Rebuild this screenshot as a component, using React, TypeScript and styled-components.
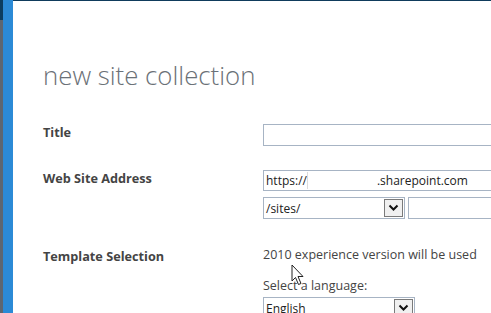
import React from 'react';
import styled, { createGlobalStyle } from 'styled-components';

const Global = createGlobalStyle`
    html, body { margin: 0; padding: 0; background: #fff; overflow: hidden; }
    body { font-family: "Open Sans", "Noto Sans", "Liberation Sans", sans-serif; }
`;

export default function App() {
    return (
        <>
            <Global />
            <Page>
                <Rail>
                    <RailEdge />
                    <RailBlue />
                </Rail>
                <Panel>
                    <Heading>new site collection</Heading>
                    <Form>
                        <Label>Title</Label>
                        <Field>
                            <TextBox />
                        </Field>

                        <Label gap={24}>Web Site Address</Label>
                        <Field gap={24}>
                            <UrlBox>
                                <span>https://</span>
                                <UrlBlank />
                                <span>.sharepoint.com</span>
                            </UrlBox>
                            <Line>
                                <Select width={142}>
                                    <span>/sites/</span>
                                    <DropButton><Chevron /></DropButton>
                                </Select>
                                <TextBox />
                            </Line>
                        </Field>

                        <Label gap={29}>Template Selection</Label>
                        <Field gap={28} tight>
                            <Note>2010 experience version will be used</Note>
                            <Note top={15}>Select a language:</Note>
                            <Select width={152} top={3}>
                                <span>English</span>
                                <DropButton><Chevron /></DropButton>
                            </Select>
                        </Field>
                    </Form>
                    <Pointer />
                </Panel>
            </Page>
        </>
    );
}

function Chevron() {
    return (
        <svg width="11" height="8" viewBox="0 0 11 8">
            <polyline points="1.5,1.5 5.5,5.5 9.5,1.5" fill="none" stroke="#111" strokeWidth="2" />
        </svg>
    );
}

function Pointer() {
    return (
        <Cursor width="14" height="22" viewBox="0 0 14 22">
            <path d="M1 1 L1 17 L4.5 13.5 L7.5 20.5 L10 19.5 L7 12.5 L12 12.5 Z" fill="#fff" stroke="#222" strokeWidth="1" strokeLinejoin="round" />
        </Cursor>
    );
}

const Page = styled.div`
    display: flex;
    width: 491px;
    height: 313px;
`;

const Rail = styled.div`
    display: flex;
    flex: 0 0 13px;
`;

const RailEdge = styled.div`
    width: 3px;
    background: linear-gradient(#0c3d60 0 20px, #5d6670 20px);
`;

const RailBlue = styled.div`
    width: 10px;
    background: #2b8ad6;
`;

const Panel = styled.div`
    position: relative;
    flex: 1;
    border-top: 1px solid #0f3b5c;
    padding-left: 30px;
    overflow: hidden;
`;

const Heading = styled.h1`
    margin: 58px 0 0;
    font-family: "Open Sans", "Noto Sans", sans-serif;
    font-weight: 300;
    font-size: 25.8px;
    line-height: 32px;
    color: #6b7177;
    white-space: nowrap;
`;

const Form = styled.div`
    display: grid;
    grid-template-columns: 220px 260px;
    margin-top: 33px;
`;

const Label = styled.div<{ gap?: number }>`
    margin-top: ${p => p.gap ?? 0}px;
    font-size: 12.7px;
    font-weight: 700;
    color: #444;
    line-height: 16px;
    white-space: nowrap;
`;

const Field = styled.div<{ gap?: number; tight?: boolean }>`
    margin-top: ${p => p.gap ?? 0}px;
    display: flex;
    flex-direction: column;
    gap: ${p => (p.tight ? 0 : 6)}px;
    align-items: flex-start;
`;

const TextBox = styled.div`
    box-sizing: border-box;
    width: 240px;
    height: 22px;
    border: 1px solid #a7b4c4;
    background: #fff;
`;

const UrlBox = styled.div`
    box-sizing: border-box;
    width: 240px;
    height: 21px;
    border: 1px solid #a7b4c4;
    display: flex;
    align-items: center;
    padding-left: 2px;
    font-size: 12px;
    color: #222;
    white-space: nowrap;
`;

const UrlBlank = styled.div`
    width: 69px;
    height: 17px;
    border-left: 1px solid #dcdcdc;
`;

const Line = styled.div`
    display: flex;
    gap: 3px;
`;

const Select = styled.div<{ width: number; top?: number }>`
    box-sizing: border-box;
    width: ${p => p.width}px;
    height: 22px;
    margin-top: ${p => p.top ?? 0}px;
    border: 1px solid #a7b4c4;
    display: flex;
    align-items: center;
    justify-content: space-between;
    padding-left: 2px;
    font-size: 12px;
    color: #222;
    flex: none;
`;

const DropButton = styled.div`
    box-sizing: border-box;
    width: 19px;
    height: 18px;
    margin-right: 1px;
    border: 1px solid #7a7a7a;
    background: #f0f0f0;
    display: flex;
    align-items: center;
    justify-content: center;
`;

const Note = styled.div<{ top?: number }>`
    margin-top: ${p => p.top ?? 0}px;
    font-size: 12.5px;
    color: #444;
    line-height: 16px;
    white-space: nowrap;
`;

const Cursor = styled.svg`
    position: absolute;
    left: 278px;
    top: 263px;
`;
